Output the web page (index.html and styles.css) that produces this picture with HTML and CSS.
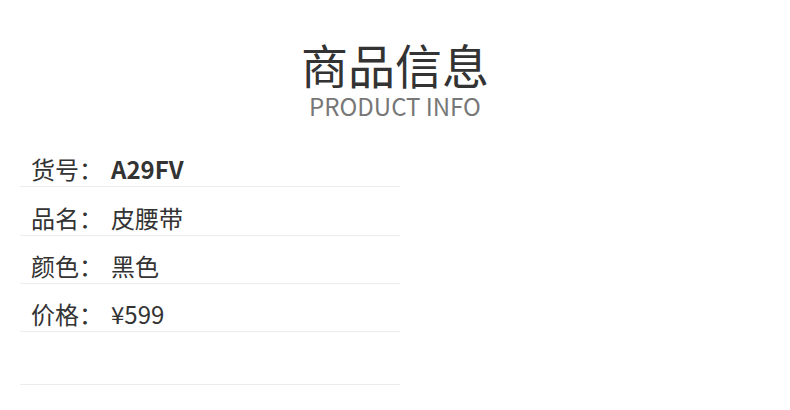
FILE: index.html
```html
<!DOCTYPE html>
<html lang="zh-CN">
<head>
<meta charset="utf-8">
<title>商品信息</title>
<link rel="stylesheet" href="styles.css">
</head>
<body>
<div class="page">
  <header class="heading">
    <h1 class="title">商品信息</h1>
    <p class="subtitle">PRODUCT INFO</p>
  </header>
  <ul class="specs">
    <li class="row"><span class="label">货号：</span><span class="value strong">A29FV</span></li>
    <li class="row"><span class="label">品名：</span><span class="value">皮腰带</span></li>
    <li class="row"><span class="label">颜色：</span><span class="value">黑色</span></li>
    <li class="row"><span class="label">价格：</span><span class="value">¥599</span></li>
    <li class="row row-empty"></li>
  </ul>
</div>
</body>
</html>
```

FILE: styles.css
```css
html, body {
  margin: 0;
  padding: 0;
  background: #ffffff;
}
body {
  font-family: "Noto Sans CJK SC", "Noto Sans", sans-serif;
  color: #333333;
}
.page {
  width: 790px;
  height: 410px;
  overflow: hidden;
}
.heading {
  display: flex;
  flex-direction: column;
  align-items: center;
  padding-top: 34px;
}
.title {
  margin: 0;
  font-size: 47px;
  font-weight: 400;
  line-height: 60px;
  color: #333333;
  letter-spacing: 0;
}
.subtitle {
  margin: 0;
  font-size: 24px;
  font-weight: 400;
  line-height: 24px;
  color: #777777;
}
.specs {
  list-style: none;
  margin: 21px 0 0 20px;
  padding: 0;
  width: 380px;
}
.row {
  display: flex;
  align-items: flex-end;
  height: 47px;
  border-bottom: 1px solid #ececec;
  padding-left: 11px;
  font-size: 24px;
  line-height: 34px;
  color: #333333;
}
.row:nth-child(2) {
  height: 48px;
}
.label {
  width: 80px;
}
.strong {
  font-weight: 700;
}
.row-empty {
  height: 52px;
}
```
